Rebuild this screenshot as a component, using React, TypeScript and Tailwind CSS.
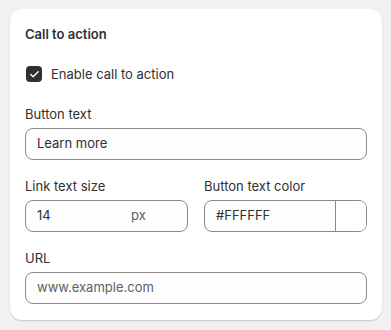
import { Check } from 'lucide-react';

const font = { fontFamily: 'Inter, "Noto Sans", sans-serif' };

function Field({ label, children }: { label: string; children: React.ReactNode }) {
  return (
    <div className="flex flex-col gap-[4px]">
      <span className="text-[13px] leading-[20px] text-[#303030]">{label}</span>
      {children}
    </div>
  );
}

const inputCls =
  'flex h-[32px] items-center rounded-[8px] border border-[#8a8a8a] bg-[#fdfdfd] px-[11px] text-[13px] text-[#303030]';

export default function App() {
  return (
    <div className="min-h-[330px] w-[391px] bg-[#f1f1f1] pt-[9px]" style={font}>
      <div className="ml-[10px] w-[372px] rounded-[12px] bg-white px-[15px] pt-[15px] pb-[16px] shadow-[0_1px_0_0_rgba(26,26,26,0.07),0_1px_2px_0_rgba(0,0,0,0.12)]">
        <h2 className="text-[13px] font-semibold leading-[20px] text-[#303030]">Call to action</h2>

        <label className="mt-[20px] flex items-center gap-[9px]">
          <span className="ml-[1px] flex h-[16px] w-[16px] items-center justify-center rounded-[4px] bg-[#303030]">
            <Check size={11} strokeWidth={3} className="text-white" />
          </span>
          <span className="text-[13px] leading-[20px] text-[#303030]">Enable call to action</span>
        </label>

        <div className="mt-[20px] flex flex-col gap-[16px]">
          <Field label="Button text">
            <div className={inputCls}>Learn more</div>
          </Field>

          <div className="grid grid-cols-2 gap-[16px]">
            <Field label="Link text size">
              <div className={inputCls}>
                <span className="w-[94px]">14</span>
                <span className="text-[#616161]">px</span>
              </div>
            </Field>
            <Field label="Button text color">
              <div className="flex h-[32px] items-center overflow-hidden rounded-[8px] border border-[#8a8a8a] bg-[#fdfdfd] text-[13px] text-[#303030]">
                <span className="flex-1 px-[11px]">#FFFFFF</span>
                <span className="h-full w-[31px] border-l border-[#8a8a8a] bg-white" />
              </div>
            </Field>
          </div>

          <Field label="URL">
            <div className={inputCls + ' text-[#616161]'}>www.example.com</div>
          </Field>
        </div>
      </div>
    </div>
  );
}
